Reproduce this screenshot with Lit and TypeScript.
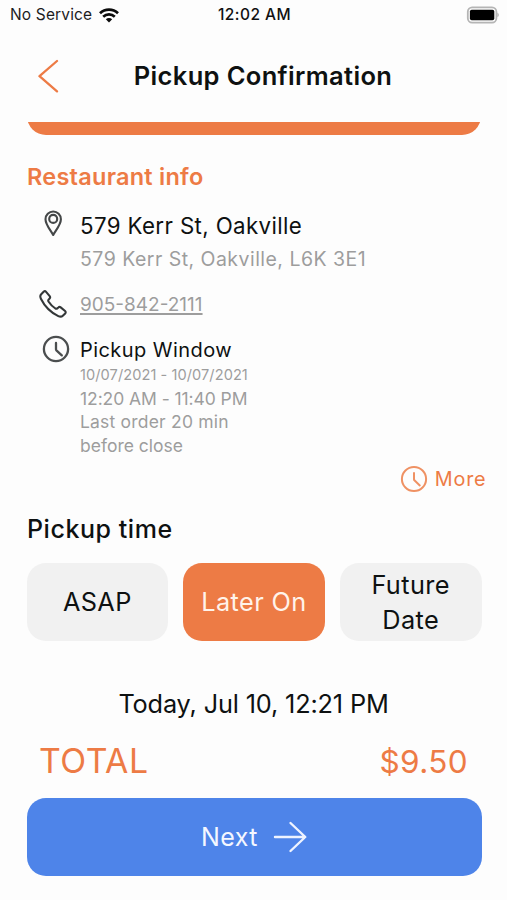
import { LitElement, html, css, svg } from "lit";
import { customElement, property, state } from "lit/decorators.js";
import { classMap } from "lit/directives/class-map.js";

const clockShape = svg`
  <circle cx="14" cy="14" r="12.1"></circle>
  <path d="M14 8V14.2Q14 14.8 14.4 15.3L19.8 20.4"></path>
`;

@customElement("status-bar")
class StatusBar extends LitElement {
  static styles = css`
    :host {
      display: grid;
      grid-template-columns: 1fr auto 1fr;
      align-items: center;
      height: 30px;
      padding: 0 8px 0 10px;
      font-size: 15.5px;
      line-height: 30px;
      color: #1c1c1e;
    }
    .left { display: flex; align-items: center; gap: 7px; }
    .carrier { letter-spacing: 0.15px; }
    .time { font-weight: 500; letter-spacing: 0.45px; color: #111; }
    .battery { justify-self: end; display: block; }
    .wifi { display: block; }
  `;
  render() {
    return html`
      <div class="left">
        <span class="carrier">No Service</span>
        <svg class="wifi" width="20" height="15" viewBox="0 0 20 15">
          <g fill="none" stroke="#0b0b0b" stroke-width="2.7">
            <path d="M1 5.3C6 .4 14 .4 19 5.3"></path>
            <path d="M4.2 8.7C7.5 5.6 12.5 5.6 15.8 8.7"></path>
          </g>
          <path d="M6.8 11.2C8.6 9.5 11.4 9.5 13.2 11.2L10 14.6Z" fill="#0b0b0b"></path>
        </svg>
      </div>
      <span class="time">12:02 AM</span>
      <svg class="battery" width="33" height="18" viewBox="0 0 33 18">
        <rect x="1.8" y="1.4" width="28.6" height="15.2" rx="4.4" fill="#fdfdfd" stroke="#b5b5b5" stroke-width="1.8"></rect>
        <rect x="3.9" y="3.8" width="24.4" height="10.4" rx="1.8" fill="#000"></rect>
        <path d="M31.4 6.7C33.2 7.4 33.2 10.4 31.4 11.1Z" fill="#b0b0b0"></path>
      </svg>
    `;
  }
}

@customElement("time-chip")
class TimeChip extends LitElement {
  @property() label = "";
  @property({ type: Boolean }) selected = false;
  static styles = css`
    :host { display: block; }
    .chip {
      box-sizing: border-box;
      display: flex;
      align-items: center;
      justify-content: center;
      width: 100%;
      height: 78px;
      padding: 1px 12px 0;
      border: 0;
      border-radius: 19px;
      background: #f1f1f1;
      color: #0e1111;
      font: inherit;
      font-size: 25.3px;
      line-height: 34.3px;
      text-align: center;
      letter-spacing: 0.4px;
    }
    .selected { background: #ed7b45; color: #fff3ea; }
  `;
  render() {
    return html`<button class=${classMap({ chip: true, selected: this.selected })}>${this.label}</button>`;
  }
}

@customElement("app-root")
class AppRoot extends LitElement {
  @state() private choice = "Later On";
  private options = ["ASAP", "Later On", "Future Date"];

  static styles = css`
    :host {
      display: flex;
      flex-direction: column;
      box-sizing: border-box;
      width: 507px;
      height: 900px;
      overflow: hidden;
      background: #fdfdfd;
      color: #0e1111;
      font-family: Inter, "Liberation Sans", sans-serif;
      white-space: nowrap;
    }
    svg { display: block; fill: none; stroke-linecap: round; stroke-linejoin: round; }
    .header {
      display: grid;
      grid-template-columns: 98px 1fr 79px;
      align-items: center;
      height: 92px;
      padding: 0 18px;
    }
    .back { margin-left: 19px; }
    .title {
      margin: 0;
      text-align: center;
      font-size: 25.5px;
      font-weight: 600;
      line-height: 32px;
      letter-spacing: 0.35px;
    }
    .scroll-edge {
      display: flex;
      align-items: flex-end;
      height: 13px;
      margin: 0 26px 0 27px;
      overflow: hidden;
    }
    .card { flex: 1; flex-shrink: 0; height: 78px; border-radius: 19px; background: #ed7b45; }
    .heading {
      margin: 28px 0 0 27px;
      font-size: 23.5px;
      font-weight: 600;
      line-height: 28px;
      letter-spacing: 0.25px;
      color: #ed7b45;
    }
    .row { display: grid; grid-template-columns: 53px 1fr; margin-left: 27px; }
    .address { margin-top: 21px; }
    .phone { margin-top: 22px; }
    .window { margin-top: 20px; }
    .pin { margin: -2px 0 0 17px; }
    .handset { margin: -3px 0 0 12px; }
    .clock { margin: -3px 0 0 14.5px; }
    .muted { color: #9d9d9d; }
    .street { font-size: 22.3px; line-height: 28px; letter-spacing: 0.37px; }
    .full { margin-top: 7px; font-size: 19.5px; line-height: 24px; letter-spacing: 0.47px; }
    .number { font-size: 19px; line-height: 24px; text-decoration: underline; text-decoration-thickness: 1.5px; text-underline-offset: 2px; }
    .name { font-size: 20px; line-height: 25px; letter-spacing: 0.44px; }
    .dates { font-size: 14.6px; line-height: 24px; letter-spacing: 0.06px; }
    .line { font-size: 17.5px; line-height: 24px; }
    .hours { line-height: 23px; letter-spacing: -0.07px; }
    .cutoff { letter-spacing: 0.2px; }
    .more {
      display: flex;
      align-items: center;
      align-self: flex-end;
      gap: 7px;
      height: 28px;
      margin: 7px 20.6px 0 0;
      font-size: 19.8px;
      letter-spacing: 0.8px;
      color: #ed7b45;
    }
    .subheading { margin: 21px 0 0 27px; font-size: 25px; font-weight: 500; line-height: 30px; letter-spacing: 0.55px; }
    .chips {
      display: grid;
      grid-template-columns: repeat(3, 1fr);
      gap: 15px;
      margin: 19px 25.5px 0 26.5px;
      white-space: normal;
    }
    .when { margin-top: 48px; text-align: center; font-size: 25.3px; line-height: 30px; letter-spacing: -0.16px; }
    .total {
      display: flex;
      justify-content: space-between;
      align-items: baseline;
      margin: 22px 39px 0 39px;
      line-height: 40px;
      color: #ed7b45;
    }
    .label { font-size: 33.8px; letter-spacing: 0.5px; }
    .amount { font-size: 31.5px; letter-spacing: 0.4px; }
    .next {
      display: flex;
      align-items: center;
      justify-content: center;
      gap: 15px;
      height: 78px;
      margin: 16px 25.5px 0 26.5px;
      padding: 0;
      border: 0;
      border-radius: 19px;
      background: #4e84e9;
      color: #f4f7ff;
      font: inherit;
      font-size: 25px;
      letter-spacing: 0.4px;
    }
  `;

  render() {
    return html`
      <status-bar></status-bar>
      <div class="header">
        <svg class="back" width="22" height="34" viewBox="0 0 22 34" stroke="#ed7b45" stroke-width="2.3">
          <path d="M20 2L2.5 17.2L20 32.4"></path>
        </svg>
        <h1 class="title">Pickup Confirmation</h1>
      </div>
      <div class="scroll-edge"><div class="card"></div></div>

      <div class="heading">Restaurant info</div>

      <div class="row address">
        <svg class="pin" width="19" height="27" viewBox="0 0 19 27" stroke="#444748" stroke-width="2.1">
          <path d="M9.2 25C7 20.6 1.5 14.8 1.5 9.2a7.7 7.7 0 0 1 15.4 0C16.9 14.8 11.4 20.6 9.2 25Z"></path>
          <circle cx="9.2" cy="8.9" r="4"></circle>
        </svg>
        <div>
          <div><span class="street">579 Kerr St, Oakville</span></div>
          <div class="full muted"><span>579 Kerr St, Oakville, L6K 3E1</span></div>
        </div>
      </div>

      <div class="row phone">
        <svg class="handset" width="28" height="28" viewBox="0 0 28 28" stroke="#333738" stroke-width="2.1">
          <path d="M2.2 4.2L4.6 1.8C5.4 1.1 6.4 1.1 7.1 1.9L10.7 6.2C11.3 7 11.2 7.9 10.6 8.5L9.6 9.6C9.1 10.2 9.1 10.8 9.5 11.5C11.2 14.2 13.6 16.6 16.4 18.5C17.1 18.9 17.7 18.9 18.3 18.4L19.4 17.5C20 16.9 20.9 16.8 21.7 17.4L26.1 21C26.9 21.7 26.9 22.7 26.2 23.4L23.8 25.7C22.6 26.9 21 26.9 19.3 26.1C11.8 22.4 5.6 16.2 1.9 8.7C1.1 7 1.1 5.3 2.2 4.2Z"></path>
        </svg>
        <div><span class="number muted">905-842-2111</span></div>
      </div>

      <div class="row window">
        <svg class="clock" width="28" height="28" viewBox="0 0 28 28" stroke="#4b4e4f" stroke-width="2.3">${clockShape}</svg>
        <div>
          <div class="name"><span>Pickup Window</span></div>
          <div class="dates muted">10/07/2021 - 10/07/2021</div>
          <div class="line hours muted">12:20 AM - 11:40 PM</div>
          <div class="line cutoff muted">Last order 20 min</div>
          <div class="line muted">before close</div>
        </div>
      </div>

      <div class="more">
        <svg width="28" height="28" viewBox="0 0 28 28" stroke="#ef9163" stroke-width="2">${clockShape}</svg>
        <span>More</span>
      </div>

      <div class="subheading">Pickup time</div>
      <div class="chips">
        ${this.options.map(
          (o) => html`<time-chip .label=${o} ?selected=${o === this.choice} @click=${() => (this.choice = o)}></time-chip>`
        )}
      </div>

      <div class="when">Today, Jul 10, 12:21 PM</div>
      <div class="total"><span class="label">TOTAL</span><span class="amount">$9.50</span></div>
      <button class="next">
        <span>Next</span>
        <svg width="34" height="32" viewBox="0 0 34 32" stroke="#eef3ff" stroke-width="2.4">
          <path d="M2 16H32M17.5 2L32.3 16L17.5 30"></path>
        </svg>
      </button>
    `;
  }
}
